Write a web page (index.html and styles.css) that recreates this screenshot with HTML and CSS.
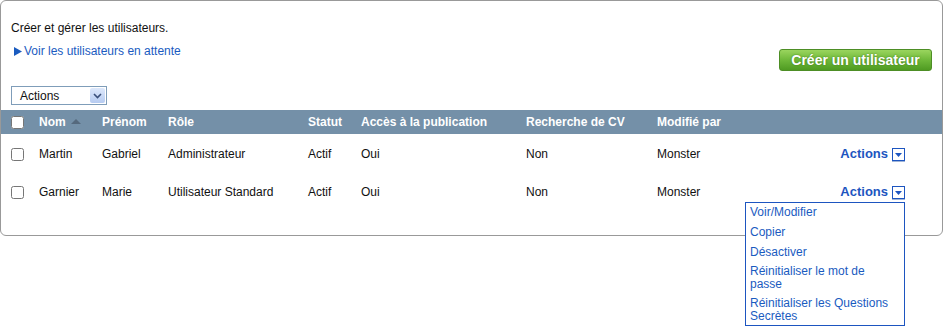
FILE: index.html
```html
<!DOCTYPE html>
<html lang="fr">
<head>
    <meta charset="UTF-8">
    <meta name="viewport" content="width=device-width, initial-scale=1.0">
    <title>Utilisateurs</title>
    <link rel="stylesheet" href="styles.css">
</head>
<body>
    <div class="panel">
        <div class="intro">
            <p class="desc">Créer et gérer les utilisateurs.</p>
            <div class="toolbar">
                <a href="#" class="pending-link"><svg class="tri" width="8" height="9" viewBox="0 0 8 9"><path d="M0 0 L8 4.5 L0 9 Z" fill="#1a5bbf"/></svg>Voir les utilisateurs en attente</a>
                <button class="create-btn">Créer un utilisateur</button>
            </div>
            <div class="select">
                <span class="select-label">Actions</span>
                <span class="select-arrow">
                    <svg width="9" height="6" viewBox="0 0 9 6"><path d="M1 1 L4.5 4.5 L8 1" fill="none" stroke="#3a4f7a" stroke-width="1.6"/></svg>
                </span>
            </div>
        </div>

        <table class="users">
            <colgroup>
                <col style="width:38px">
                <col style="width:63px">
                <col style="width:66px">
                <col style="width:140px">
                <col style="width:53px">
                <col style="width:165px">
                <col style="width:131px">
                <col style="width:120px">
                <col>
            </colgroup>
            <thead>
                <tr>
                    <th class="check"><input type="checkbox"></th>
                    <th>Nom <span class="sort"></span></th>
                    <th>Prénom</th>
                    <th>Rôle</th>
                    <th>Statut</th>
                    <th>Accès à la publication</th>
                    <th>Recherche de CV</th>
                    <th>Modifié par</th>
                    <th></th>
                </tr>
            </thead>
            <tbody>
                <tr>
                    <td class="check"><input type="checkbox"></td>
                    <td>Martin</td>
                    <td>Gabriel</td>
                    <td>Administrateur</td>
                    <td>Actif</td>
                    <td>Oui</td>
                    <td>Non</td>
                    <td>Monster</td>
                    <td class="act">
                        <span class="act-wrap">
                            <a href="#" class="act-link">Actions</a><span class="act-btn"><svg width="7" height="4" viewBox="0 0 7 4"><path d="M0 0 H7 L3.5 4 Z" fill="#1d55c0"/></svg></span>
                        </span>
                    </td>
                </tr>
                <tr>
                    <td class="check"><input type="checkbox"></td>
                    <td>Garnier</td>
                    <td>Marie</td>
                    <td>Utilisateur Standard</td>
                    <td>Actif</td>
                    <td>Oui</td>
                    <td>Non</td>
                    <td>Monster</td>
                    <td class="act">
                        <span class="act-wrap">
                            <a href="#" class="act-link">Actions</a><span class="act-btn"><svg width="7" height="4" viewBox="0 0 7 4"><path d="M0 0 H7 L3.5 4 Z" fill="#1d55c0"/></svg></span>
                            <ul class="menu">
                                <li><a href="#">Voir/Modifier</a></li>
                                <li><a href="#">Copier</a></li>
                                <li><a href="#">Désactiver</a></li>
                                <li class="wrap"><a href="#">Réinitialiser le mot de passe</a></li>
                                <li class="wrap last"><a href="#">Réinitialiser les Questions Secrètes</a></li>
                            </ul>
                        </span>
                    </td>
                </tr>
            </tbody>
        </table>
    </div>
</body>
</html>
```

FILE: styles.css
```css
html, body {
    height: 100%;
}
body {
    font-family: 'Liberation Sans', Arial, sans-serif;
    font-size: 12px;
    color: #111;
    background: #fff;
    margin: 0;
    min-height: 326px;
}
.panel {
    width: 943px;
    height: 236px;
    box-sizing: border-box;
    border: 1px solid #999;
    border-radius: 6px;
}
.intro {
    padding: 20px 10px 0 10px;
}
.desc {
    margin: 0;
    line-height: 14px;
}
.toolbar {
    display: flex;
    justify-content: space-between;
    align-items: flex-start;
    margin-top: 9px;
    height: 27px;
}
.pending-link {
    display: flex;
    align-items: center;
    color: #1a5bbf;
    text-decoration: none;
    line-height: 14px;
}
.tri {
    margin-left: 3px;
    margin-right: 2px;
}
.create-btn {
    margin-top: 5px;
    width: 153px;
    height: 22px;
    padding: 0;
    border: 1px solid #4d8e25;
    border-radius: 3px;
    background: linear-gradient(#9ad55e, #6fb83a 50%, #4f9b22);
    color: #fff;
    font-family: 'Liberation Sans', Arial, sans-serif;
    font-size: 14px;
    font-weight: bold;
    text-shadow: 0 0 2px #3d7a16;
    cursor: pointer;
}
.select {
    display: flex;
    align-items: center;
    justify-content: space-between;
    width: 96px;
    height: 19px;
    box-sizing: border-box;
    border: 1px solid #7f9db9;
    margin-top: 15px;
    background: #fff;
}
.select-label {
    padding-left: 8px;
    color: #111;
}
.select-arrow {
    display: flex;
    align-items: center;
    justify-content: center;
    width: 15px;
    height: 15px;
    margin-right: 1px;
    border-radius: 2px;
    background: linear-gradient(#dde8fb, #b6cbf1);
}
.users {
    width: 941px;
    margin-top: 5px;
    border-collapse: collapse;
    table-layout: fixed;
}
.users th {
    background: #7490a8;
    color: #fff;
    font-weight: bold;
    text-align: left;
    height: 24px;
    padding: 0;
    white-space: nowrap;
}
.users td {
    height: 38px;
    padding: 2px 0 0 0;
    box-sizing: border-box;
    white-space: nowrap;
}
.users .check {
    padding-left: 10px;
}
.users input[type="checkbox"] {
    margin: 0;
    width: 13px;
    height: 13px;
    vertical-align: middle;
}
.sort {
    display: inline-block;
    width: 0;
    height: 0;
    border-left: 5px solid transparent;
    border-right: 5px solid transparent;
    border-bottom: 5px solid #55697d;
    margin-left: 2px;
    vertical-align: 2px;
}
.act {
    text-align: right;
    padding-right: 37px !important;
}
.act-wrap {
    position: relative;
    display: inline-flex;
    align-items: center;
}
.act-link {
    color: #1d55c0;
    font-weight: bold;
    font-size: 13px;
    text-decoration: none;
    margin-top: -2px;
}
.act-btn {
    display: inline-flex;
    align-items: center;
    justify-content: center;
    width: 11px;
    height: 11px;
    margin-left: 4px;
    border: 1px solid #1d55c0;
    background: #fff;
    box-shadow: 0 1px 0 #9fb4d8;
}
.menu {
    position: absolute;
    top: 16px;
    right: 0;
    width: 160px;
    box-sizing: border-box;
    margin: 0;
    padding: 0;
    list-style: none;
    border: 1px solid #1d55c0;
    background: #fff;
    text-align: left;
    white-space: normal;
    z-index: 2;
}
.menu li {
    padding: 3px 4px 4px 4px;
    line-height: 13px;
}
.menu li.wrap {
    padding-top: 2px;
}
.menu li.last {
    padding-bottom: 2px;
}
.menu a {
    color: #1a5bbf;
    text-decoration: none;
}
```
